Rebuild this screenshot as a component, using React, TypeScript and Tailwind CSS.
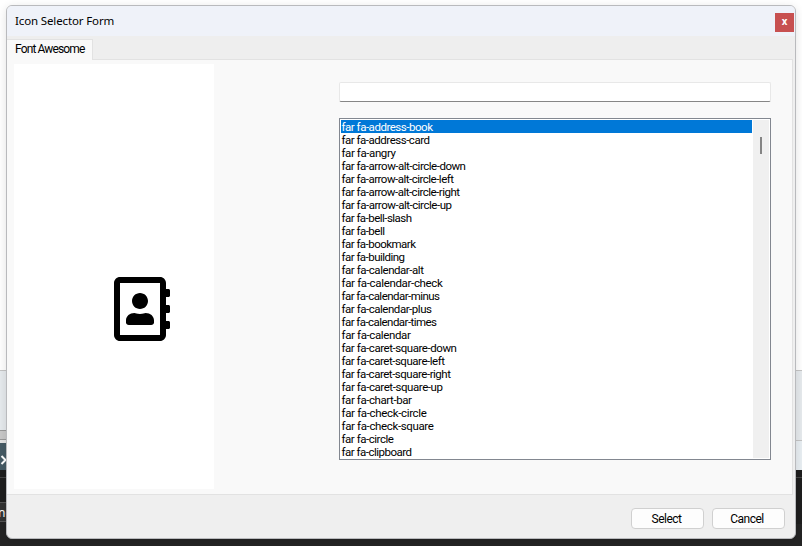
import { useLayoutEffect, useRef, useState } from "react";
import { FaRegAddressBook } from "react-icons/fa";

const icons: [string, number][] = [
  ["address-book", 91], ["address-card", 88], ["angry", 54], ["arrow-alt-circle-down", 124],
  ["arrow-alt-circle-left", 112], ["arrow-alt-circle-right", 118], ["arrow-alt-circle-up", 110],
  ["bell-slash", 70], ["bell", 43], ["bookmark", 74], ["building", 63], ["calendar-alt", 82],
  ["calendar-check", 101], ["calendar-minus", 98], ["calendar-plus", 90], ["calendar-times", 95],
  ["calendar", 69], ["caret-square-down", 115], ["caret-square-left", 103], ["caret-square-right", 109],
  ["caret-square-up", 101], ["chart-bar", 70], ["check-circle", 85], ["check-square", 92],
  ["circle", 52], ["clipboard", 70],
];

/** One line of text, tracked so that it fills the given width. */
function FittedText({ text, width }: { text: string; width: number }) {
  const ref = useRef<HTMLSpanElement>(null);
  const [spacing, setSpacing] = useState(0);
  useLayoutEffect(() => {
    if (ref.current) {
      setSpacing((width - ref.current.getBoundingClientRect().width) / text.length);
    }
  }, [text, width]);
  return (
    <span ref={ref} className="inline-block whitespace-nowrap" style={{ letterSpacing: spacing }}>
      {text}
    </span>
  );
}

function Desktop() {
  return (
    <div className="absolute inset-0 flex justify-between bg-white">
      <div className="flex w-[20px] flex-col">
        <div className="h-[370px] shrink-0" />
        <div className="h-[60px] shrink-0 border-t border-[#c4c4c4] bg-[#e6eaed]" />
        <div className="h-[10px] shrink-0 border-y border-[#999] bg-[#c8c8c8]" />
        <div className="h-[3px] shrink-0 bg-[#e4e4e4]" />
        <div className="flex h-[27px] shrink-0 items-center bg-[#455a64]">
          <svg className="mt-[6px] h-[10px] w-[7px] shrink-0" viewBox="0 0 7 10" fill="none" stroke="#fff" strokeWidth="2">
            <path d="M1.5 1l4 4-4 4" />
          </svg>
        </div>
        <div className="h-[8px] shrink-0 border-b border-[#444] bg-[#1e1e1e]" />
        <div className="h-[24px] shrink-0 bg-[#1e1e1e]" />
        <div className="h-[20px] shrink-0 border-y border-[#555] bg-[#333] font-['Noto_Sans',sans-serif] text-[12px] leading-[20px] text-white">
          <span className="-ml-[2px]">ne</span>
        </div>
        <div className="flex-1 bg-[#242424]" />
      </div>
      <div className="flex w-[8px] flex-col">
        <div className="h-[370px]" />
        <div className="h-[70px] border-t border-[#c4c4c4] bg-[#e6eaed]" />
        <div className="h-[30px] border-t border-[#c4c4c4] bg-[#e8eef2]" />
        <div className="h-[8px] border-b border-[#444] bg-[#1e1e1e]" />
        <div className="h-[46px] bg-[#1e1e1e]" />
        <div className="flex-1 bg-[#242424]" />
      </div>
    </div>
  );
}

export default function App() {
  return (
    <div className="relative h-[546px] w-[802px] overflow-hidden font-['Roboto',sans-serif] text-black">
      <Desktop />
      <div className="absolute bottom-0 left-[7px] right-[6px] h-[16px] bg-[#242424]" />
      <div className="absolute left-[6px] top-[5px] flex h-[534px] w-[790px] flex-col overflow-hidden rounded-[6px] border border-[#b9babd] bg-[#efefef] shadow-[0_2px_10px_rgba(0,0,0,0.12)]">
        <header className="flex h-[30px] shrink-0 justify-between bg-[#eff2f9]">
          <h1 className="pl-2 pt-[5px] font-['Noto_Sans',sans-serif] text-[11.5px] leading-5 tracking-[-0.13px]">Icon Selector Form</h1>
          <button className="mr-px mt-[7px] h-[19px] w-[19px] bg-[#c75050] pb-[2px] text-[11px] font-bold leading-[17px] text-white">x</button>
        </header>
        <nav className="flex h-[23px] shrink-0 items-end bg-[#eeeeee]">
          <div className="z-10 -mb-px h-[21px] w-[86px] whitespace-nowrap border border-b-0 border-l-0 border-[#e2e2e2] bg-[#f9f9f9] pl-2 text-[12px] leading-[18px]">
            <FittedText text="Font Awesome" width={69.5} />
          </div>
        </nav>
        <main className="mr-[2px] flex h-[436px] shrink-0 border border-l-0 border-[#e2e2e2] bg-[#f9f9f9]">
          <div className="ml-[7px] mt-1 flex h-[425px] w-[200px] bg-white pl-[100px] pt-[213px]">
            <FaRegAddressBook className="h-16 w-14 shrink-0" />
          </div>
          <div className="ml-[125px] mt-[22px] w-[432px]">
            <input aria-label="Search" className="block h-[20px] w-full rounded-[2px] border border-[#e8e8e8] border-b-[#868686] bg-white outline-none" />
            <div className="mt-[16px] flex h-[342px] border border-[#828790] bg-white p-px">
              <ul className="w-[411px] text-[11.5px] leading-[15px]">
                {icons.map(([name, width], i) => (
                  <li key={name} className={i === 0 ? "h-[13px] bg-[#0078d7] pl-[0.5px] text-white" : "h-[13px] pl-[0.5px]"}>
                    <FittedText text={`far fa-${name}`} width={width} />
                  </li>
                ))}
              </ul>
              <div className="ml-px flex flex-1 justify-center bg-[#f0f0f0]">
                <div className="mt-[17px] h-[17px] w-[2px] bg-[#858585]" />
              </div>
            </div>
          </div>
        </main>
        <footer className="flex flex-1 justify-end gap-2 pr-[10px] pt-[13px]">
          <button className="h-[21px] w-[73px] rounded-[4px] border border-[#d0d0d0] bg-[#fdfdfd] pr-[2px] pt-px text-[12px] leading-[18px] tracking-[-0.5px]">Select</button>
          <button className="h-[21px] w-[73px] rounded-[4px] border border-[#d0d0d0] bg-[#fdfdfd] pr-[3px] pt-px text-[12px] leading-[18px] tracking-[-0.5px]">Cancel</button>
        </footer>
      </div>
    </div>
  );
}
